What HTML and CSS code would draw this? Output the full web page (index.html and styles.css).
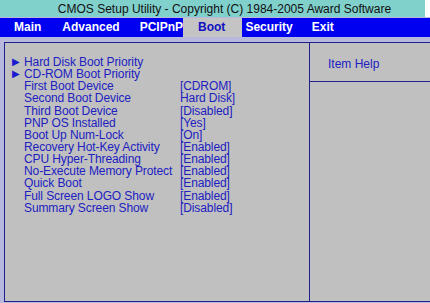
FILE: index.html
```html
<!DOCTYPE html>
<html lang="en">

<head>
    <meta charset="UTF-8" />
    <title>CMOS Setup Utility</title>
    <link rel="stylesheet" href="styles.css">
</head>

<body>
    <div class="screen">
        <!-- Title -->
        <div class="title">CMOS Setup Utility - Copyright (C) 1984-2005 Award Software</div>

        <!-- Menu bar -->
        <ul class="menu">
            <li class="m-main">Main</li>
            <li class="m-adv">Advanced</li>
            <li class="m-pci">PCIPnP</li>
            <li class="m-boot active">Boot</li>
            <li class="m-sec">Security</li>
            <li class="m-exit">Exit</li>
        </ul>

        <!-- Boot page -->
        <div class="panel">
            <div class="items">
                <div class="row sub"><span class="arrow">&#9654;</span>Hard Disk Boot Priority</div>
                <div class="row sub"><span class="arrow">&#9654;</span>CD-ROM Boot Priority</div>
                <div class="row"><span class="name">First Boot Device</span><span class="val">[CDROM]</span></div>
                <div class="row"><span class="name">Second Boot Device</span><span class="val">Hard Disk]</span></div>
                <div class="row"><span class="name">Third Boot Device</span><span class="val">[Disabled]</span></div>
                <div class="row"><span class="name">PNP OS Installed</span><span class="val">[Yes]</span></div>
                <div class="row"><span class="name">Boot Up Num-Lock</span><span class="val">[On]</span></div>
                <div class="row"><span class="name">Recovery Hot-Key Activity</span><span class="val">[Enabled]</span></div>
                <div class="row"><span class="name">CPU Hyper-Threading</span><span class="val">[Enabled]</span></div>
                <div class="row"><span class="name">No-Execute Memory Protect</span><span class="val">[Enabled]</span></div>
                <div class="row"><span class="name">Quick Boot</span><span class="val">[Enabled]</span></div>
                <div class="row"><span class="name">Full Screen LOGO Show</span><span class="val">[Enabled]</span></div>
                <div class="row"><span class="name">Summary Screen Show</span><span class="val">[Disabled]</span></div>
            </div>
            <div class="help">
                <div class="help-head">Item Help</div>
                <div class="help-body"></div>
            </div>
        </div>
    </div>
</body>

</html>
```

FILE: styles.css
```css
* {
    margin: 0;
    padding: 0;
    box-sizing: border-box;
}

body {
    font-family: "Liberation Sans", Arial, sans-serif;
    background: #c0c0c0;
    width: 430px;
    height: 303px;
    overflow: hidden;
}

.screen {
    display: flex;
    flex-direction: column;
    height: 303px;
    background: linear-gradient(to bottom, #fff 0, #fff 17px, #b8b8dc 17px);
}

/* Title */
.title {
    height: 17px;
    margin-right: 5px;
    background: #80d0cc;
    color: #111;
    font-size: 12px;
    line-height: 18px;
    text-align: center;
    padding-left: 24px;
}

/* Menu */
.menu {
    list-style: none;
    display: flex;
    height: 19px;
    margin-top: 1px;
    background: #0000f0;
    font-size: 12px;
    font-weight: bold;
    color: #fff;
    line-height: 19px;
}

.m-main { margin-left: 14px; }
.m-adv { margin-left: 21px; }
.m-pci { margin-left: 20px; }
.m-sec { margin-left: 3px; }
.m-exit { margin-left: 19px; }

.menu li.active {
    background: #c4c4c4;
    color: #1010c0;
    padding: 0 17px 0 15px;
}

/* Panel */
.panel {
    flex: 1;
    display: grid;
    grid-template-columns: 305px 1fr;
    margin: 5px 0 1px 4px;
    border: 1px solid #20208c;
    border-right: none;
    background: #c0c0c0;
    color: #2020c0;
    font-size: 12px;
}

.items {
    border-right: 1px solid #20208c;
    padding: 13px 0 0 7px;
}

.row {
    display: flex;
    height: 12.15px;
    line-height: 12px;
    white-space: nowrap;
    letter-spacing: -0.1px;
}

.row .name {
    width: 156px;
    margin-left: 12px;
}

.arrow {
    width: 12px;
    font-size: 10px;
    color: #1a1ad0;
}

.help {
    display: flex;
    flex-direction: column;
}

.help-head {
    height: 39px;
    border-bottom: 1px solid #20208c;
    padding: 14px 0 0 18px;
}
```
